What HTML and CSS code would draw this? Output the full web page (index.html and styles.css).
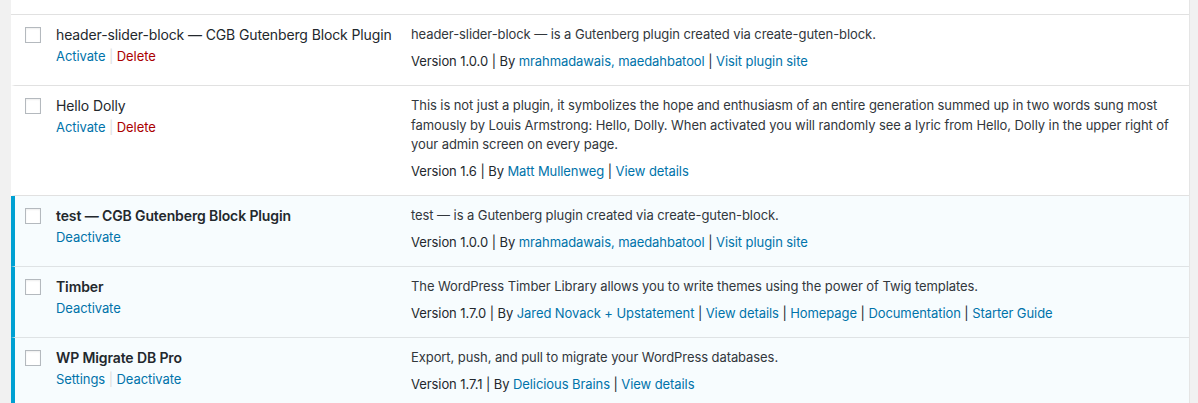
FILE: index.html
```html
<!DOCTYPE html>
<html lang="en">
<head>
<meta charset="utf-8">
<title>Plugins</title>
<link rel="stylesheet" href="styles.css">
</head>
<body>
<div class="list">
  <div class="top-spacer"></div>

  <div class="row">
    <div class="check"><span class="cb"></span></div>
    <div class="title">
      <div class="name">header-slider-block — CGB Gutenberg Block Plugin</div>
      <div class="actions"><a class="link">Activate</a> <span class="sep">|</span> <a class="del">Delete</a></div>
    </div>
    <div class="desc">
      <p>header-slider-block — is a Gutenberg plugin created via create-guten-block.</p>
      <div class="meta">Version 1.0.0 | By <a class="link">mrahmadawais, maedahbatool</a> | <a class="link">Visit plugin site</a></div>
    </div>
  </div>

  <div class="row">
    <div class="check"><span class="cb"></span></div>
    <div class="title">
      <div class="name">Hello Dolly</div>
      <div class="actions"><a class="link">Activate</a> <span class="sep">|</span> <a class="del">Delete</a></div>
    </div>
    <div class="desc">
      <p>This is not just a plugin, it symbolizes the hope and enthusiasm of an entire generation summed up in two words sung most famously by Louis Armstrong: Hello, Dolly. When activated you will randomly see a lyric from Hello, Dolly in the upper right of your admin screen on every page.</p>
      <div class="meta">Version 1.6 | By <a class="link">Matt Mullenweg</a> | <a class="link">View details</a></div>
    </div>
  </div>

  <div class="row active">
    <div class="check"><span class="cb"></span></div>
    <div class="title">
      <div class="name">test — CGB Gutenberg Block Plugin</div>
      <div class="actions"><a class="link">Deactivate</a></div>
    </div>
    <div class="desc">
      <p>test — is a Gutenberg plugin created via create-guten-block.</p>
      <div class="meta">Version 1.0.0 | By <a class="link">mrahmadawais, maedahbatool</a> | <a class="link">Visit plugin site</a></div>
    </div>
  </div>

  <div class="row active">
    <div class="check"><span class="cb"></span></div>
    <div class="title">
      <div class="name">Timber</div>
      <div class="actions"><a class="link">Deactivate</a></div>
    </div>
    <div class="desc">
      <p>The WordPress Timber Library allows you to write themes using the power of Twig templates.</p>
      <div class="meta">Version 1.7.0 | By <a class="link">Jared Novack + Upstatement</a> | <a class="link">View details</a> | <a class="link">Homepage</a> | <a class="link">Documentation</a> | <a class="link">Starter Guide</a></div>
    </div>
  </div>

  <div class="row active">
    <div class="check"><span class="cb"></span></div>
    <div class="title">
      <div class="name">WP Migrate DB Pro</div>
      <div class="actions"><a class="link">Settings</a> <span class="sep">|</span> <a class="link">Deactivate</a></div>
    </div>
    <div class="desc">
      <p>Export, push, and pull to migrate your WordPress databases.</p>
      <div class="meta">Version 1.7.1 | By <a class="link">Delicious Brains</a> | <a class="link">View details</a></div>
    </div>
  </div>
</div>
</body>
</html>
```

FILE: styles.css
```css
html, body {
  margin: 0;
  padding: 0;
}

body {
  background: #f1f1f1;
  font-family: Inter, "Liberation Sans", sans-serif;
  font-size: 13px;
  letter-spacing: -0.08px;
  color: #32373c;
  overflow: hidden;
}

.list {
  margin: 0 8px 0 11px;
  background: #fff;
  border-right: 1px solid #e5e5e5;
}

.top-spacer {
  height: 14px;
  border-bottom: 1px solid #e1e1e1;
}

.row {
  display: grid;
  grid-template-columns: 41px 355px 1fr;
  border-left: 4px solid transparent;
  border-bottom: 1px solid #e1e1e1;
  padding-top: 10px;
  background: #fff;
}

.row.active {
  background: #f7fcfe;
  border-left-color: #00a0d2;
  border-bottom-color: #dfe3e5;
}

.check {
  padding: 2px 0 0 10px;
}

.cb {
  display: block;
  width: 16px;
  height: 16px;
  box-sizing: border-box;
  border: 1px solid #b4b9be;
  background: #fff;
  box-shadow: inset 0 1px 2px rgba(0, 0, 0, 0.07);
}

.name {
  font-size: 14px;
  line-height: 20px;
  letter-spacing: -0.12px;
  color: #23282d;
  white-space: nowrap;
}

.active .name {
  font-weight: 600;
}

.actions {
  margin-top: 1px;
  line-height: 20px;
  color: #ddd;
}

.link {
  color: #0073aa;
  text-decoration: none;
}

.del {
  color: #a00;
}

.sep {
  color: #ddd;
}

.desc {
  padding: 0 10px 14px 0;
}

.desc p {
  margin: 0 0 7px;
  line-height: 19.5px;
}

.meta {
  line-height: 19.5px;
  color: #23282d;
}
```
